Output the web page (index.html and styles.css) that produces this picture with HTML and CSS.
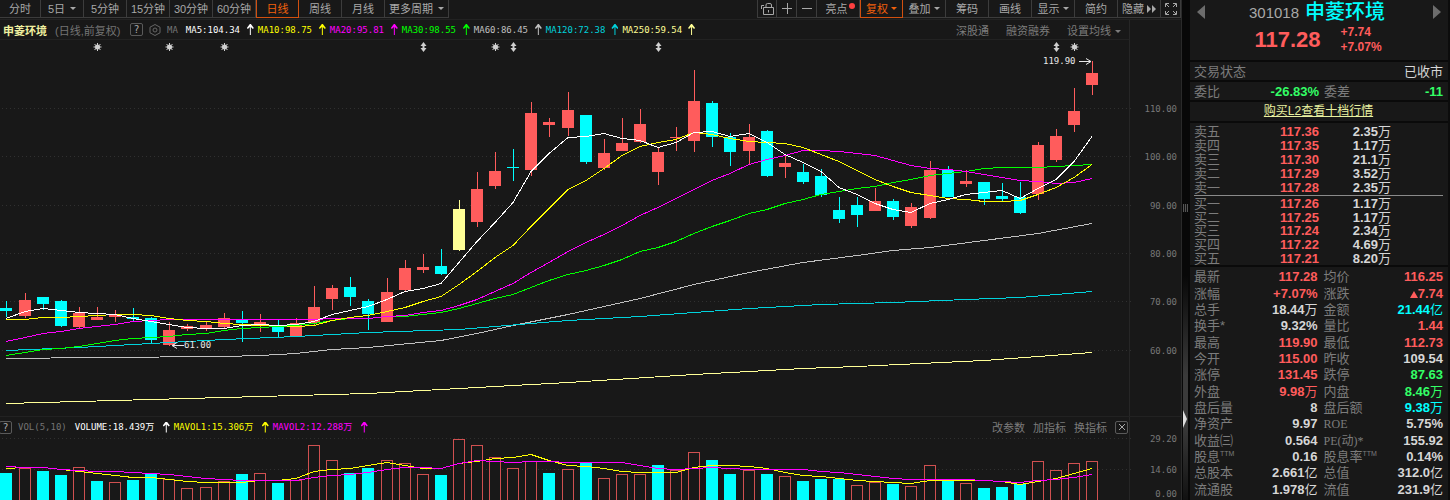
FILE: index.html
```html
<!DOCTYPE html>
<html lang="zh-CN">
<head>
    <meta charset="UTF-8">
    <title>申菱环境 301018</title>
    <link rel="stylesheet" href="styles.css">
</head>
<body>
    <main class="chart">
        <nav class="toolbar">
            <div class="group">
                <button class="narrow">分时</button>
                <button class="day">5日<i class="caret"></i></button>
                <button>5分钟</button>
                <button>15分钟</button>
                <button>30分钟</button>
                <button>60分钟</button>
                <button class="active">日线</button>
                <button>周线</button>
                <button>月线</button>
                <button class="wide">更多周期<i class="caret"></i></button>
            </div>
            <div class="group right">
                <button class="icon" aria-label="解锁">
                    <svg width="16" height="16" viewBox="0 0 16 16"><path d="M4.5 6.500H14.500V13.500H4.500V6.500M12.500 6V4Q12.500 2.500 11 2.500H8.500Q7 2.500 7 4V6M9.500 9V11.500M2.500 8V4.500H5"/></svg>
                </button>
                <button class="icon" aria-label="放大">
                    <svg width="12" height="12" viewBox="0 0 12 12"><path d="M1 5.500H11M6.500 0V11"/></svg>
                </button>
                <button class="icon" aria-label="缩小">
                    <svg width="12" height="12" viewBox="0 0 12 12"><path d="M1 5.500H11"/></svg>
                </button>
                <button>亮点<i class="dot"></i></button>
                <button class="active">复权<i class="caret"></i></button>
                <button>叠加<i class="caret"></i></button>
                <button>筹码</button>
                <button>画线</button>
                <button>显示<i class="caret"></i></button>
                <button>简约</button>
                <button>隐藏<svg width="9" height="8" viewBox="0 0 9 8"><path class="solid" d="M0 0L4 4L0 8ZM5 0L9 4L5 8Z"/></svg></button>
                <button class="icon" aria-label="全屏">
                    <svg width="14" height="14" viewBox="0 0 14 14"><path d="M1.500 5V1.500H5M9 1.500H12.500V5M12.500 9V12.500H9M5 12.500H1.500V9M2 2L5 5M12 2L9 5M12 12L9 9M2 12L5 9"/></svg>
                </button>
            </div>
        </nav>

        <div class="info">
            <div class="info-main">
                <b class="name">申菱环境</b>
                <span class="mode">(日线,前复权)</span>
                <button class="help">?</button>
                <button class="gear" aria-label="设置">
                    <svg width="12" height="12" viewBox="0 0 12 12"><path d="M6 .5L11 3.200V8.800L6 11.500L1 8.800V3.200Z"/><circle cx="6" cy="6" r="2"/></svg>
                </button>
                <span class="code dim">MA</span>
                <div class="averages">
                    <span class="ma5">MA5:104.34<i class="up"></i></span>
                    <span class="ma10">MA10:98.75<i class="up"></i></span>
                    <span class="ma20">MA20:95.81<i class="up"></i></span>
                    <span class="ma30">MA30:98.55<i class="up"></i></span>
                    <span class="ma60">MA60:86.45<i class="up"></i></span>
                    <span class="ma120">MA120:72.38<i class="up"></i></span>
                    <span class="ma250">MA250:59.54<i class="up"></i></span>
                </div>
                <div class="links">
                    <button>深股通</button>
                    <button>融资融券</button>
                    <button>设置均线<i class="caret"></i></button>
                </div>
            </div>
        </div>

        <svg class="plot" id="price" viewBox="0 40 1181 376"></svg>

        <div class="info volume">
            <div class="info-main">
                <button class="help">?</button>
                <span class="code dim">VOL(5,10)</span>
                <div class="averages">
                    <span class="ma5">VOLUME:18.439万<i class="up"></i></span>
                    <span class="ma10">MAVOL1:15.306万<i class="up"></i></span>
                    <span class="ma20">MAVOL2:12.288万<i class="up"></i></span>
                </div>
                <div class="links">
                    <button>改参数</button>
                    <button>加指标</button>
                    <button>换指标</button>
                    <button class="help" aria-label="关闭"><svg width="8" height="8" viewBox="0 0 8 8"><path d="M1 1L7 7M7 1L1 7"/></svg></button>
                </div>
            </div>
        </div>

        <svg class="plot" id="volume" viewBox="0 437 1181 63"></svg>
    </main>

    <div class="splitter">
        <i class="grip"></i>
        <i class="handle"></i>
    </div>

    <aside class="quote">
        <header>
            <button class="prev" aria-label="上一只"></button>
            <div class="title"><span>301018</span><h1>申菱环境</h1></div>
            <button class="next" aria-label="下一只"></button>
            <div class="price">
                <strong>117.28</strong>
                <div><b>+7.74</b><b>+7.07%</b></div>
            </div>
        </header>
        <div class="line"><span>交易状态</span><em>已收市</em></div>
        <div class="line ratio"><span>委比</span><b class="green">-26.83%</b><span>委差</span><b class="green">-11</b></div>
        <div class="line center"><a href="#">购买L2查看十档行情</a></div>

        <div class="depth">
            <table>
                <tr><th>卖五</th><td class="red">117.36</td><td>2.35<em>万</em></td></tr>
                <tr><th>卖四</th><td class="red">117.35</td><td>1.17<em>万</em></td></tr>
                <tr><th>卖三</th><td class="red">117.30</td><td>21.1<em>万</em></td></tr>
                <tr><th>卖二</th><td class="red">117.29</td><td>3.52<em>万</em></td></tr>
                <tr><th>卖一</th><td class="red">117.28</td><td>2.35<em>万</em></td></tr>
            </table>
            <table>
                <tr><th>买一</th><td class="red">117.26</td><td>1.17<em>万</em></td></tr>
                <tr><th>买二</th><td class="red">117.25</td><td>1.17<em>万</em></td></tr>
                <tr><th>买三</th><td class="red">117.24</td><td>2.34<em>万</em></td></tr>
                <tr><th>买四</th><td class="red">117.22</td><td>4.69<em>万</em></td></tr>
                <tr><th>买五</th><td class="red">117.21</td><td>8.20<em>万</em></td></tr>
            </table>
        </div>

        <table class="stats">
            <tr><th>最新</th><td class="red">117.28</td><th>均价</th><td class="red">116.25</td></tr>
            <tr><th>涨幅</th><td class="red">+7.07%</td><th>涨跌</th><td class="red"><i class="rise"></i>7.74</td></tr>
            <tr><th>总手</th><td>18.44<em>万</em></td><th>金额</th><td class="cyan">21.44<em>亿</em></td></tr>
            <tr><th>换手*</th><td>9.32%</td><th>量比</th><td class="red">1.44</td></tr>
            <tr><th>最高</th><td class="red">119.90</td><th>最低</th><td class="red">112.73</td></tr>
            <tr><th>今开</th><td class="red">115.00</td><th>昨收</th><td>109.54</td></tr>
            <tr><th>涨停</th><td class="red">131.45</td><th>跌停</th><td class="green">87.63</td></tr>
            <tr><th>外盘</th><td class="red">9.98<em>万</em></td><th>内盘</th><td class="green">8.46<em>万</em></td></tr>
            <tr><th>盘后量</th><td>8</td><th>盘后额</th><td class="cyan">9.38<em>万</em></td></tr>
            <tr><th>净资产</th><td>9.97</td><th class="latin">ROE</th><td>5.75%</td></tr>
            <tr><th>收益㈢</th><td>0.564</td><th class="latin">PE(动)*</th><td>155.92</td></tr>
            <tr><th>股息<sup>TTM</sup></th><td>0.16</td><th>股息率<sup>TTM</sup></th><td>0.14%</td></tr>
            <tr><th>总股本</th><td>2.661<em>亿</em></td><th>总值</th><td>312.0<em>亿</em></td></tr>
            <tr><th>流通股</th><td>1.978<em>亿</em></td><th>流值</th><td>231.9<em>亿</em></td></tr>
        </table>
    </aside>

    <script src="script.js"></script>
</body>
</html>
```
FILE: styles.css
```css
* {
    box-sizing: border-box;
}
body {
    margin: 0;
    min-height: 100vh;
    display: grid;
    grid-template-columns: 1fr 8px 260px;
    background: #181818;
    color: #d6d6d6;
    font-family: "Liberation Sans", "Noto Sans CJK SC", sans-serif;
    font-size: 11px;
    overflow: hidden;
}
button {
    margin: 0;
    padding: 0;
    border: 0;
    background: none;
    color: inherit;
    font: inherit;
    cursor: pointer;
}
svg path,
svg circle {
    fill: none;
    stroke: currentColor;
}
svg .solid {
    fill: currentColor;
    stroke: none;
}
i, em {
    font-style: normal;
}
.chart {
    min-width: 0;
    border-right: 1px solid #2a2a2a;
}

/* 顶部工具栏 */
.toolbar {
    display: flex;
    justify-content: space-between;
    height: 20px;
    border-bottom: 1px solid #222;
}
.group {
    display: flex;
    height: 18px;
}
.group button {
    display: flex;
    align-items: center;
    justify-content: center;
    gap: 5px;
    width: 43px;
    line-height: 16px;
    border: solid #3c3c3c;
    border-width: 0 1px 1px 0;
    color: #a8a8a8;
}
.group .active {
    border: 1px solid #d2500f;
    border-top: 0;
    color: #f2600c;
}
.group .narrow {
    width: 41px;
}
.group .wide {
    width: 64px;
}
.group .icon {
    width: 20px;
}
.right button {
    gap: 3px;
}
.right button:first-child {
    border-left-width: 1px;
}
.caret {
    border: 3px solid transparent;
    border-top-color: currentColor;
    border-bottom: 0;
}
.dot {
    width: 6px;
    height: 6px;
    margin: 0 -4px 6px -2px;
    border-radius: 50%;
    background: #ff4040;
}

/* 均线信息栏 */
.info {
    height: 20px;
    padding-right: 51px;
}
.info-main {
    display: flex;
    align-items: center;
    height: 100%;
    padding: 0 8px 0 3px;
    border-right: 1px solid #262626;
    border-bottom: 1px solid #222;
}
.name {
    color: #f0f0a0;
}
.mode {
    width: 79px;
    padding-left: 8px;
    color: #747474;
    white-space: nowrap;
}
.help {
    width: 13px;
    height: 13px;
    margin-left: 4px;
    border: 1px solid #5a5a5a;
    border-radius: 2px;
    color: #a8a8a8;
    font: 10px/11px "DejaVu Sans Mono", monospace;
}
.gear {
    display: flex;
    margin: 0 6px 0 6px;
    color: #666;
}
.code,
.averages {
    font: 9px/20px "DejaVu Sans Mono", "Noto Sans CJK SC", monospace;
    white-space: nowrap;
}
.dim {
    color: #747474;
}
.averages {
    display: flex;
    margin-left: 8px;
}
.averages span {
    display: flex;
    align-items: center;
    justify-content: space-between;
    min-width: 72px;
    padding-right: 4px;
    gap: 6px;
}
.up {
    width: 7px;
    height: 11px;
    background: currentColor;
    clip-path: polygon(3px 0, 4px 0, 7px 4px, 6px 5px, 4px 3px, 4px 11px, 3px 11px, 3px 3px, 1px 5px, 0 4px);
}
.ma5 { color: #fff; }
.ma10 { color: #ff0; }
.ma20 { color: #f0f; }
.ma30 { color: #0f0; }
.ma60 { color: #c0c0c0; }
.ma120 { color: #00d2dc; }
.ma250 { color: #ffff96; }
.links {
    display: flex;
    align-items: center;
    gap: 17px;
    margin-left: auto;
    color: #7c7c7c;
    white-space: nowrap;
}
.links .caret {
    display: inline-block;
    margin: 0 0 2px 4px;
}
.volume {
    height: 21px;
    border-top: 1px solid #222;
}
.volume .info-main {
    padding: 0 1px 0 0;
    border-bottom: 0;
}
.volume .help:first-child {
    margin: 0 6px 0 -1px;
}
.volume .averages span {
    min-width: 99px;
}
.volume .links {
    gap: 8px;
}
.volume .links .help {
    margin: 0;
    display: grid;
    place-items: center;
}

/* K线与成交量 */
.plot {
    display: block;
    width: 100%;
    height: auto;
    overflow: visible;
}
.plot line,
.plot rect,
.plot polyline {
    shape-rendering: crispEdges;
}
.plot polyline {
    fill: none;
    stroke: currentColor;
    stroke-width: 1;
}
.plot text {
    font: 9px "DejaVu Sans Mono", monospace;
    fill: #777;
}
.plot .note {
    fill: #e8e8e8;
}
.plot .arrow {
    stroke: #e8e8e8;
}
.plot .mark {
    fill: #d0d0d0;
    stroke: #d0d0d0;
}
.plot .solid.mark {
    stroke: none;
}
.plot .grid {
    stroke: #303030;
    stroke-dasharray: 1 3;
}
.plot .edge {
    stroke: #262626;
}
.up-bar { fill: #ff5c5c; }
.down-bar { fill: #0ff; }
.hot-bar { fill: #ffff96; }
.hollow-bar {
    fill: #181818;
    stroke: #d05050;
}

/* 分隔条 */
.splitter {
    display: grid;
    grid-template-rows: 208px 220px;
    align-items: end;
    background: linear-gradient(#080808 55%, #3a3a3a 75%, #3a3a3a 85%, #111);
    border: solid #080808;
    border-width: 0 2px 0 1px;
}
.grip {
    align-self: end;
    height: 8px;
    margin-bottom: -4px;
    background: repeating-linear-gradient(90deg, #555 0 1px, #111 1px 2px);
}
.handle {
    width: 4px;
    height: 18px;
    background: #ddd;
    clip-path: polygon(0 0, 100% 50%, 0 100%);
}

/* 右侧报价 */
.quote {
    border-right: 2px solid #0c0c0c;
    font-size: 13px;
}
.quote header {
    display: grid;
    grid-template-columns: 14px 1fr 14px;
    grid-template-rows: 25px 30px;
    height: 62px;
    padding: 0 5px;
    border-bottom: 2px solid #0a0a0a;
}
.prev,
.next {
    width: 8px;
    height: 14px;
    margin: 5px 2px;
    background: #6c6c6c;
    clip-path: polygon(100% 0, 100% 100%, 0 50%);
}
.next {
    clip-path: polygon(0 0, 100% 50%, 0 100%);
    justify-self: end;
}
.title {
    display: flex;
    align-items: center;
    justify-content: center;
    gap: 6px;
    padding-right: 4px;
    color: #a8a8a8;
    font-size: 15px;
}
.title h1 {
    margin: 0;
    color: #0ff;
    font-size: 20px;
    font-weight: 500;
    line-height: 25px;
}
.price {
    grid-column: 1 / -1;
    display: flex;
    align-items: center;
    justify-content: center;
    gap: 20px;
    padding-right: 2px;
    color: #ff5c5c;
}
.price strong {
    font-size: 22px;
    line-height: 28px;
}
.price b {
    display: block;
    font-size: 12px;
    line-height: 15px;
}
.line {
    display: flex;
    justify-content: space-between;
    height: 20px;
    padding: 0 5px 0 4px;
    border-bottom: 2px solid #0a0a0a;
    line-height: 19px;
}
.line span {
    color: #7c7c7c;
}
.line.center {
    justify-content: center;
    height: 21px;
}
.ratio b:first-of-type {
    flex: 0 0 99px;
    text-align: right;
}
.ratio span:nth-of-type(2) {
    flex: 1;
    margin-left: 5px;
}
.center a {
    color: #e8f0a0;
    font-size: 12px;
}
.quote table {
    border-collapse: collapse;
    width: 100%;
    line-height: 13px;
}
.quote th,
.quote td {
    padding: 0;
}
.quote th {
    color: #7c7c7c;
    font-weight: 400;
    text-align: left;
    white-space: nowrap;
}
.quote td {
    text-align: right;
    font-weight: 700;
    white-space: nowrap;
}
.quote em {
    font-weight: 400;
}
.depth {
    padding: 2px 5px 0 4px;
    border-bottom: 2px solid #0a0a0a;
}
.depth table {
    height: 68px;
    table-layout: fixed;
}
.depth table:last-child {
    margin-top: 1px;
}
.depth table:first-child {
    height: 71px;
    border-bottom: 1px solid #8a8a8a;
}
.depth td:nth-child(2) {
    width: 80px;
}
.depth th {
    width: 45px;
}
.depth td:last-child {
    padding-right: 52px;
}
.quote .stats {
    width: calc(100% - 9px);
    height: 229px;
    margin: 2px 5px 0 4px;
    table-layout: fixed;
    line-height: 16px;
}
.stats td:nth-child(2) {
    padding-right: 1px;
}
.stats th:nth-child(3) {
    padding-left: 5px;
}
.stats sup {
    font-size: 7px;
    line-height: 0;
}
.stats .latin {
    font-family: "Liberation Serif", "Noto Sans CJK SC", serif;
    font-size: 12px;
}
.rise {
    display: inline-block;
    border: 4px solid transparent;
    border-top: 0;
    border-bottom: 7px solid currentColor;
}
.quote .red { color: #ff5c5c; }
.quote .green { color: #3f6; }
.quote .cyan { color: #0ff; }
```
FILE: script.js
```javascript
// 每根K线：最高、实体上沿、实体下沿、最低、颜色 (r 涨 / c 跌 / y 标记)
const candles = [
    [301,308,311,317,'c'], [293,300,316,318,'r'], [297,297,304,310,'c'], [300,301,326,327,'c'],
    [307,313,327,329,'r'], [307,317,320,320,'r'], [310,315,317,322,'r'], [308,317,319,321,'c'],
    [317,318,340,344,'c'], [322,330,345,346,'r'], [324,326,329,331,'r'], [322,325,329,331,'r'],
    [313,318,327,328,'r'], [311,320,323,342,'c'], [314,322,324,332,'r'], [320,327,332,337,'c'],
    [318,323,337,337,'r'], [286,307,323,326,'r'], [285,288,299,310,'r'], [277,287,297,306,'c'],
    [299,301,314,330,'c'], [278,292,322,322,'r'], [260,268,290,291,'r'], [254,267,270,273,'r'],
    [249,266,274,275,'c'], [200,209,250,251,'y'], [172,189,222,227,'r'], [152,171,186,189,'r'],
    [149,167,168,181,'c'], [102,113,170,176,'r'], [118,122,125,137,'r'], [92,110,128,136,'r'],
    [115,115,162,164,'c'], [139,153,168,170,'r'], [118,143,151,151,'r'], [109,124,142,143,'r'],
    [147,152,172,185,'r'], [127,137,138,151,'r'], [70,101,141,152,'r'], [101,103,137,147,'c'],
    [133,137,152,166,'c'], [124,137,151,164,'r'], [130,131,176,177,'c'], [155,163,167,178,'r'],
    [164,172,182,184,'c'], [169,176,195,197,'c'], [197,210,219,223,'c'], [197,205,215,227,'c'],
    [188,201,211,211,'r'], [199,201,217,220,'c'], [203,207,226,228,'r'], [161,170,218,219,'r'],
    [166,170,197,197,'c'], [170,181,184,187,'r'], [182,182,199,205,'c'], [183,196,199,201,'c'],
    [182,197,213,214,'c'], [142,145,194,200,'r'], [129,136,160,162,'r'], [88,111,125,132,'r'],
    [61,73,85,95,'r']
];

const volumes = [473,468,471,475,467,481,482,480,473,479,488,487,481,474,473,483,480,445,460,473,
    468,460,463,474,475,439,445,457,468,461,473,469,462,478,474,474,465,470,452,460,
    474,470,474,476,481,479,479,485,482,484,486,465,480,483,488,487,484,461,470,463,461];
const fallVolumes = [0,2,3,5,7,8,13,15,19,20,24,30,32,36,39,40,42,44,45,46,49,52,54,55,56];

// 均线，每根K线一个值
const ma = {
    ma5: [318,311,308,310,312,313,314,318,321,324,327,328,328,325,324,325,324,321,314,310,306,299,291,288,283,262,241,222,202,171,153,137,136,133,138,140,147,142,132,131,136,133,142,154,162,171,187,194,203,209,212,203,199,194,192,190,198,188,179,161,136],
    ma10: [319,319,317,317,316,315,314,314,315,318,320,321,323,324,325,325,326,325,320,317,315,311,307,301,296,284,271,257,245,226,208,189,180,168,155,146,142,139,132,134,138,141,142,143,147,154,161,170,179,186,192,195,198,199,201,201,200,194,187,177,164],
    ma20: [341,337,333,331,328,326,324,321,320,319,319,319,319,319,319,319,319,319,318,318,318,316,315,312,310,305,299,291,283,272,262,251,242,234,225,215,207,198,189,180,173,164,159,155,150,150,151,153,155,160,165,168,169,171,174,177,180,181,183,182,178],
    ma30: [355,352,349,348,346,343,340,338,337,336,334,333,330,328,327,326,325,323,320,318,318,316,316,314,312,308,303,298,294,287,280,274,270,265,259,251,247,241,233,226,220,213,209,203,199,194,191,188,186,182,179,175,173,171,168,167,167,167,166,165,164]
};

// 长周期均线只存拐点：[序号, y]
const longMa = {
    ma60: [[0,358],[5,357],[12,356],[14,355],[16,353],[18,349],[20,347],[24,340],[26,333],[28,325],[31,314],[35,298],[38,284],[41,272],[44,262],[47,255],[49,250],[51,247],[54,240],[57,233],[60,223]],
    ma120: [[0,350],[4,347],[8,343],[12,339],[16,336],[20,332],[25,329],[29,323],[31,320],[35,316],[38,312],[41,308],[45,304],[49,302],[53,299],[56,297],[58,294],[60,291]],
    ma250: [[0,403],[8,399],[14,396],[20,393],[25,388],[31,382],[38,374],[41,371],[44,368],[47,366],[54,360],[57,356],[60,352]]
};

const volumeMa = {
    ma10: [468,467,467,469,471,473,475,477,477,479,481,482,482,482,480,480,478,471,469,468,465,462,465,468,468,463,461,458,457,454,460,465,466,468,471,472,472,472,467,465,465,466,468,472,475,476,478,480,481,482,483,480,480,480,480,481,484,481,478,473,468],
    ma20: [466,467,467,469,470,471,471,472,473,474,476,478,479,480,480,480,480,477,475,474,472,469,467,467,468,463,460,461,462,461,461,462,462,462,462,465,468,469,468,467,468,469,469,469,469,471,472,474,476,478,479,479,479,479,480,481,482,480,479,477,474]
};

const centre = i => Math.round(6.4 + i * 18.1);

function line(points, name) {
    return `<polyline class="${name}" points="${points.map(p => centre(p[0]) + ',' + (p[1] + 0.5)).join(' ')}"/>`;
}

function grid(rows) {
    return rows.map(([y, label]) => `
        <line class="grid" x1="2" x2="1131" y1="${y + 0.5}" y2="${y + 0.5}"/>
        <text x="1177" y="${y + 4}" text-anchor="end">${label}</text>`).join('');
}

function drawPrice() {
    const fills = { r: 'up-bar', c: 'down-bar', y: 'hot-bar' };
    let html = grid([[108,'110.00'], [156,'100.00'], [205,'90.00'], [253,'80.00'], [301,'70.00'], [350,'60.00']]);
    html += '<line class="edge" x1="1129.5" x2="1129.5" y1="40" y2="416"/>';

    candles.forEach(([high, top, bottom, low, kind], i) => {
        const x = centre(i);
        html += `<rect class="${fills[kind]}" x="${x}" y="${high}" width="1" height="${low - high}"/>`;
        html += `<rect class="${fills[kind]}" x="${x - 6}" y="${top}" width="12" height="${bottom - top}"/>`;
    });

    for (const name in longMa) html += line(longMa[name], name);
    for (const name of ['ma30', 'ma20', 'ma10', 'ma5']) html += line(ma[name].map((y, i) => [i, y]), name);

    // 除权与公告标记
    [5, 9, 12, 27, 59].forEach(i => {
        const x = centre(i) + 0.5;
        html += `<circle class="solid mark" cx="${x}" cy="47" r="2.500"/>`;
        html += `<path class="mark" d="M${x} 43V51M${x - 4} 47H${x + 4}M${x - 3} 44L${x + 3} 50M${x + 3} 44L${x - 3} 50"/>`;
    });
    [23, 28, 36, 58].forEach(i => {
        const x = centre(i) + 0.5;
        html += `<path class="solid mark" d="M${x} 42L${x + 3} 46H${x + 1}V48H${x + 3}L${x} 52L${x - 3} 48H${x - 1}V46H${x - 3}Z"/>`;
    });

    html += `
        <text class="note" x="1043" y="64">119.90</text>
        <path class="arrow" d="M1079 61.500H1091M1086 58.500L1091 61.500L1086 64.500"/>
        <text class="note" x="184" y="348">61.00</text>
        <path class="arrow" d="M184 345.500H172M177 342.500L172 345.500L177 348.500"/>`;
    document.getElementById('price').innerHTML = html;
}

function drawVolume() {
    let html = grid([[438,'29.20'], [469,'14.60']]);
    html += '<text x="1177" y="497" text-anchor="end">0.00</text>';
    html += '<line class="edge" x1="1129.5" x2="1129.5" y1="437" y2="500"/>';

    volumes.forEach((y, i) => {
        const x = centre(i);
        if (fallVolumes.includes(i)) {
            html += `<rect class="down-bar" x="${x - 6}" y="${y}" width="12" height="${500 - y}"/>`;
        } else {
            html += `<rect class="hollow-bar" x="${x - 5.5}" y="${y + 0.5}" width="11" height="${504 - y}"/>`;
        }
    });

    for (const name in volumeMa) html += line(volumeMa[name].map((y, i) => [i, y]), name);
    document.getElementById('volume').innerHTML = html;
}

drawPrice();
drawVolume();
```
